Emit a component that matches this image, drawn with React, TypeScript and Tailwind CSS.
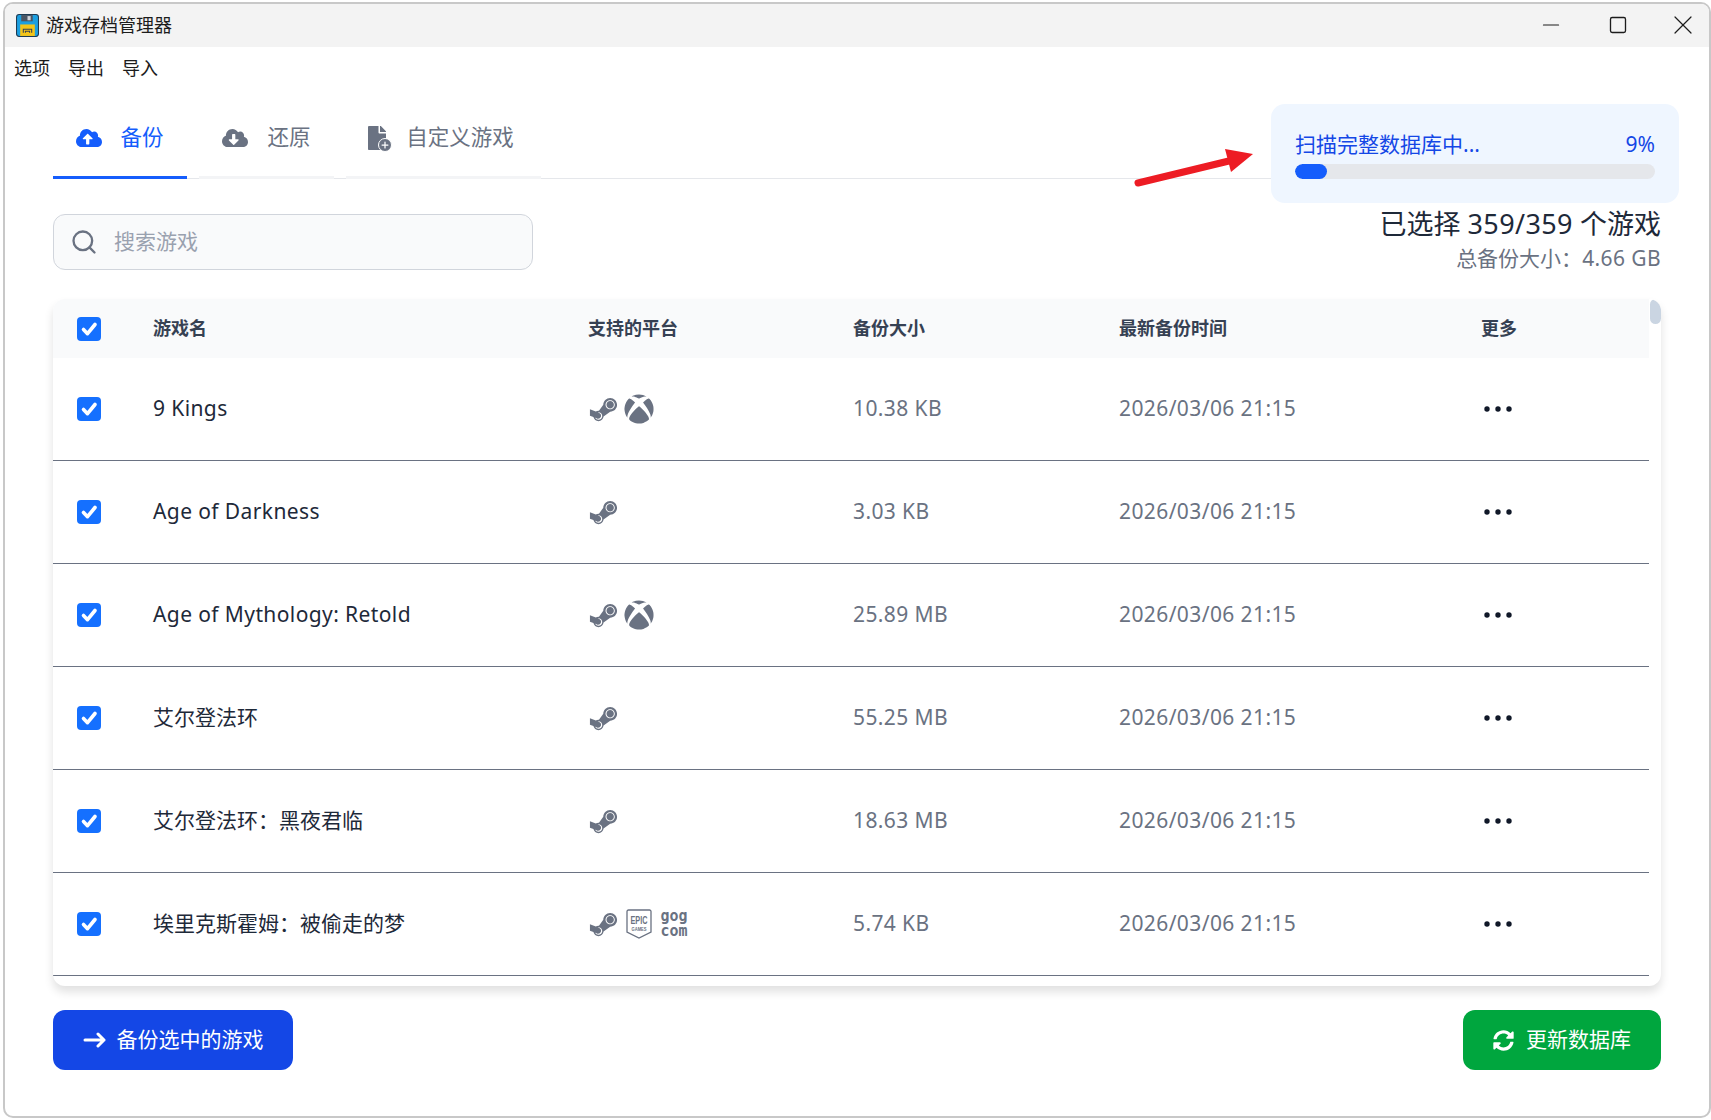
import React from 'react';
import { FaCloudUploadAlt, FaCloudDownloadAlt, FaSteamSymbol, FaXbox, FaSyncAlt, FaFile } from 'react-icons/fa';
import { Search, Minus, Square, X, Plus } from 'lucide-react';

type Platform = 'steam' | 'xbox' | 'epic' | 'gog';

interface Game {
  name: string;
  platforms: Platform[];
  size: string;
}

const games: Game[] = [
  { name: '9 Kings', platforms: ['steam', 'xbox'], size: '10.38 KB' },
  { name: 'Age of Darkness', platforms: ['steam'], size: '3.03 KB' },
  { name: 'Age of Mythology: Retold', platforms: ['steam', 'xbox'], size: '25.89 MB' },
  { name: '艾尔登法环', platforms: ['steam'], size: '55.25 MB' },
  { name: '艾尔登法环：黑夜君临', platforms: ['steam'], size: '18.63 MB' },
  { name: '埃里克斯霍姆：被偷走的梦', platforms: ['steam', 'epic', 'gog'], size: '5.74 KB' },
];

const isLatin = (s: string) => /^[\x00-\x7f]+$/.test(s);

const EpicIcon = () => (
  <svg viewBox="0 0 26 30" className="ml-[2px] h-[30px] w-[26px]" fill="currentColor">
    <path d="M2.5 1h21a1.5 1.5 0 0 1 1.5 1.5V23l-12 6-12-6V2.5A1.5 1.5 0 0 1 2.5 1z" fill="none" stroke="currentColor" strokeWidth="1.3" />
    <text x="13" y="15" textAnchor="middle" fontFamily="Liberation Sans Narrow, Liberation Sans, sans-serif" fontWeight="700" fontSize="11" textLength="17" lengthAdjust="spacingAndGlyphs">EPIC</text>
    <text x="13" y="21.5" textAnchor="middle" fontFamily="Liberation Sans, sans-serif" fontWeight="700" fontSize="4.5" textLength="15" lengthAdjust="spacingAndGlyphs">GAMES</text>
  </svg>
);

const GogIcon = () => (
  <svg viewBox="0 0 28 26" className="ml-[3px] h-[26px] w-[28px]" fill="currentColor">
    <text x="14" y="10" textAnchor="middle" fontFamily="DejaVu Sans Mono, monospace" fontWeight="700" fontSize="15" textLength="27" lengthAdjust="spacingAndGlyphs">gog</text>
    <text x="14" y="25" textAnchor="middle" fontFamily="DejaVu Sans Mono, monospace" fontWeight="700" fontSize="15" textLength="27" lengthAdjust="spacingAndGlyphs">com</text>
  </svg>
);

const PlatformIcon = ({ type }: { type: Platform }) => {
  if (type === 'steam') return <FaSteamSymbol className="h-[31px] w-[31px]" />;
  if (type === 'xbox') return <FaXbox className="h-[30px] w-[30px]" />;
  if (type === 'epic') return <EpicIcon />;
  return <GogIcon />;
};

const Checkbox = () => (
  <div className="flex h-6 w-6 items-center justify-center rounded-[4px] bg-[#1570ff] text-white">
    <svg viewBox="0 0 24 24" className="h-6 w-6" fill="none" stroke="currentColor" strokeWidth="3.6" strokeLinecap="round" strokeLinejoin="round">
      <path d="M6.5 12.5l4 4.2 7.5-9.2" />
    </svg>
  </div>
);

const Dots = () => (
  <svg viewBox="0 0 34 8" className="h-[8px] w-[34px] fill-[#101828]">
    <circle cx="6" cy="4" r="2.7" />
    <circle cx="17" cy="4" r="2.7" />
    <circle cx="28" cy="4" r="2.7" />
  </svg>
);

const Logo = () => (
  <svg viewBox="0 0 22 22" className="h-[23px] w-[23px]">
    <rect x="0.5" y="0.5" width="21" height="21" rx="2.5" fill="#1c9fe0" stroke="#1d3a52" />
    <rect x="5" y="1" width="11" height="6" fill="#4b5563" />
    <rect x="11" y="2" width="3" height="4" fill="#d1d5db" />
    <rect x="4" y="10" width="14" height="11" fill="#f5c518" />
    <path d="M7 18v-3.5h8V18M9 18v-1.5h4V18" fill="none" stroke="#374151" strokeWidth="1" />
  </svg>
);

const App = () => {
  return (
    <div className="h-[1120px] w-[1711px] bg-white pt-[2px] pr-0 pb-[2px] pl-[3px] font-['Noto_Sans','Noto_Sans_CJK_SC',sans-serif]">
      <div className="relative flex h-full flex-col overflow-hidden rounded-[10px] border-2 border-[#c8c8c8]">
        {/* title bar */}
        <div className="flex h-[43px] shrink-0 items-center bg-[#f3f3f3] pl-[11px] text-[18px] text-[#1c1c1c]">
          <Logo />
          <span className="ml-[7px]">游戏存档管理器</span>
          <div className="-mt-[2px] ml-auto flex items-center pr-[10px]">
            <Minus className="h-[26px] w-[26px]" strokeWidth={1} />
            <Square className="ml-[44px] h-[20px] w-[20px]" strokeWidth={1.6} />
            <X className="ml-[39px] h-[32px] w-[32px]" strokeWidth={0.9} />
          </div>
        </div>

        {/* menu */}
        <div className="flex h-[41px] shrink-0 items-center gap-[18px] pt-[2px] pl-[9px] text-[18px] text-[#1c1c1c]">
          <span>选项</span>
          <span>导出</span>
          <span>导入</span>
        </div>

        <div className="flex min-h-0 flex-1 flex-col px-[48px] pb-[46px]">
          {/* tabs */}
          <div className="flex h-[91px] shrink-0 items-end border-b border-[#e5e7eb]">
            <div className="-mb-px flex h-[73px] w-[134px] items-center justify-center gap-[18px] border-b-[3px] border-[#155dfc] pb-[7px] text-[21.5px] text-[#155dfc]">
              <FaCloudUploadAlt className="h-[26px] w-[26px]" />
              <span>备份</span>
            </div>
            <div className="-mb-px ml-[12px] flex h-[73px] w-[135px] items-center justify-center gap-[19px] border-b-[3px] border-[#f3f4f6] pb-[7px] text-[21.5px] text-[#6a7282]">
              <FaCloudDownloadAlt className="h-[26px] w-[26px]" />
              <span>还原</span>
            </div>
            <div className="-mb-px ml-[12px] flex h-[73px] w-[195px] items-center justify-center gap-[19px] border-b-[3px] border-[#f3f4f6] pb-[7px] text-[21.5px] text-[#6a7282]">
              <span className="relative -ml-[6px]">
                <FaFile className="h-[24px] w-[20px]" />
                <span className="absolute -right-[5px] -bottom-[2px] flex h-[14px] w-[14px] items-center justify-center rounded-full border border-white bg-[#6a7282] text-white">
                  <Plus className="h-[10px] w-[10px]" strokeWidth={3} />
                </span>
              </span>
              <span>自定义游戏</span>
            </div>
          </div>

          {/* search + summary */}
          <div className="mt-[35px] flex h-[85px] shrink-0 items-start justify-between">
            <div className="flex h-[56px] w-[480px] items-center rounded-[12px] border border-[#d1d5dc] bg-[#f9fafb] pl-[16px]">
              <Search className="h-[28px] w-[28px] text-[#6a7282]" strokeWidth={2} />
              <span className="ml-[16px] text-[21px] text-[#99a1af]">搜索游戏</span>
            </div>
            <div className="-mt-[9px] flex flex-col items-end">
              <div className="text-[27px] leading-[38px] text-[#1e2939]">
                已选择 <span className="tracking-[0.4px]">359/359</span> 个游戏
              </div>
              <div className="text-[21px] leading-[30px] text-[#6a7282]">
                总备份大小：<span className="tracking-[0.4px]">4.66 GB</span>
              </div>
            </div>
          </div>

          {/* table */}
          <div className="relative min-h-0 flex-1 overflow-hidden rounded-[12px] bg-white shadow-[0_6px_10px_rgba(0,0,0,0.12)]">
            <div className="absolute top-0 right-0 h-[25px] w-[11px] rounded-full bg-[#cad5e2]" />
            <div className="mr-[12px]">
              <div className="flex h-[59px] items-center bg-[#f9fafb] text-[18px] font-bold text-[#364153]">
                <div className="w-[100px] pl-[24px]">
                  <Checkbox />
                </div>
                <div className="w-[435px]">游戏名</div>
                <div className="w-[265px]">支持的平台</div>
                <div className="w-[266px]">备份大小</div>
                <div className="w-[362px]">最新备份时间</div>
                <div>更多</div>
              </div>
              {games.map((game) => (
                <div key={game.name} className="flex h-[103px] items-center border-b border-[#6a7282] text-[21px] text-[#6a7282]">
                  <div className="w-[100px] pl-[24px]">
                    <Checkbox />
                  </div>
                  <div className={isLatin(game.name) ? 'w-[435px] tracking-[0.4px] text-[#1e2939]' : 'w-[435px] text-[#1e2939]'}>{game.name}</div>
                  <div className="flex w-[265px] items-center gap-[5px] text-[#6a7282]">
                    {game.platforms.map((p) => (
                      <PlatformIcon key={p} type={p} />
                    ))}
                  </div>
                  <div className="w-[266px] tracking-[0.4px]">{game.size}</div>
                  <div className="w-[362px] tracking-[0.4px]">2026/03/06 21:15</div>
                  <Dots />
                </div>
              ))}
            </div>
          </div>

          {/* actions */}
          <div className="mt-[24px] flex shrink-0 items-center justify-between text-[21px] text-white">
            <button className="flex h-[60px] w-[240px] items-center justify-center gap-[10px] rounded-[12px] bg-[#1447e6]">
              <svg viewBox="0 0 24 16" className="h-[16px] w-[24px]" fill="none" stroke="currentColor" strokeWidth="3" strokeLinecap="round" strokeLinejoin="round">
                <path d="M2 8h19M15 2l6 6-6 6" />
              </svg>
              <span>备份选中的游戏</span>
            </button>
            <button className="flex h-[60px] w-[198px] items-center justify-center gap-[12px] rounded-[12px] bg-[#00a63e]">
              <FaSyncAlt className="h-[21px] w-[21px]" />
              <span>更新数据库</span>
            </button>
          </div>
        </div>

        {/* scan progress floats over the tab line */}
        <div className="absolute top-[100px] right-[30px] h-[99px] w-[408px] rounded-[14px] bg-[#eff6ff] px-[24px] pt-[26px]">
          <div className="flex items-center justify-between text-[21px] leading-[28px] text-[#1447e6]">
            <span>扫描完整数据库中...</span>
            <span>9%</span>
          </div>
          <div className="mt-[6px] h-[15px] w-full overflow-hidden rounded-full bg-[#e5e7eb]">
            <div className="h-full rounded-full bg-[#155dfc]" style={{ width: '9%' }} />
          </div>
        </div>

        {/* red annotation arrow */}
        <svg className="absolute top-[140px] left-[1128px] h-[50px] w-[130px]" viewBox="0 0 130 50">
          <line x1="5" y1="39" x2="100" y2="16" stroke="#ed1c24" strokeWidth="7" strokeLinecap="round" />
          <polygon points="92,5 120,10 98,28" fill="#ed1c24" />
        </svg>
      </div>
    </div>
  );
};

export default App;
